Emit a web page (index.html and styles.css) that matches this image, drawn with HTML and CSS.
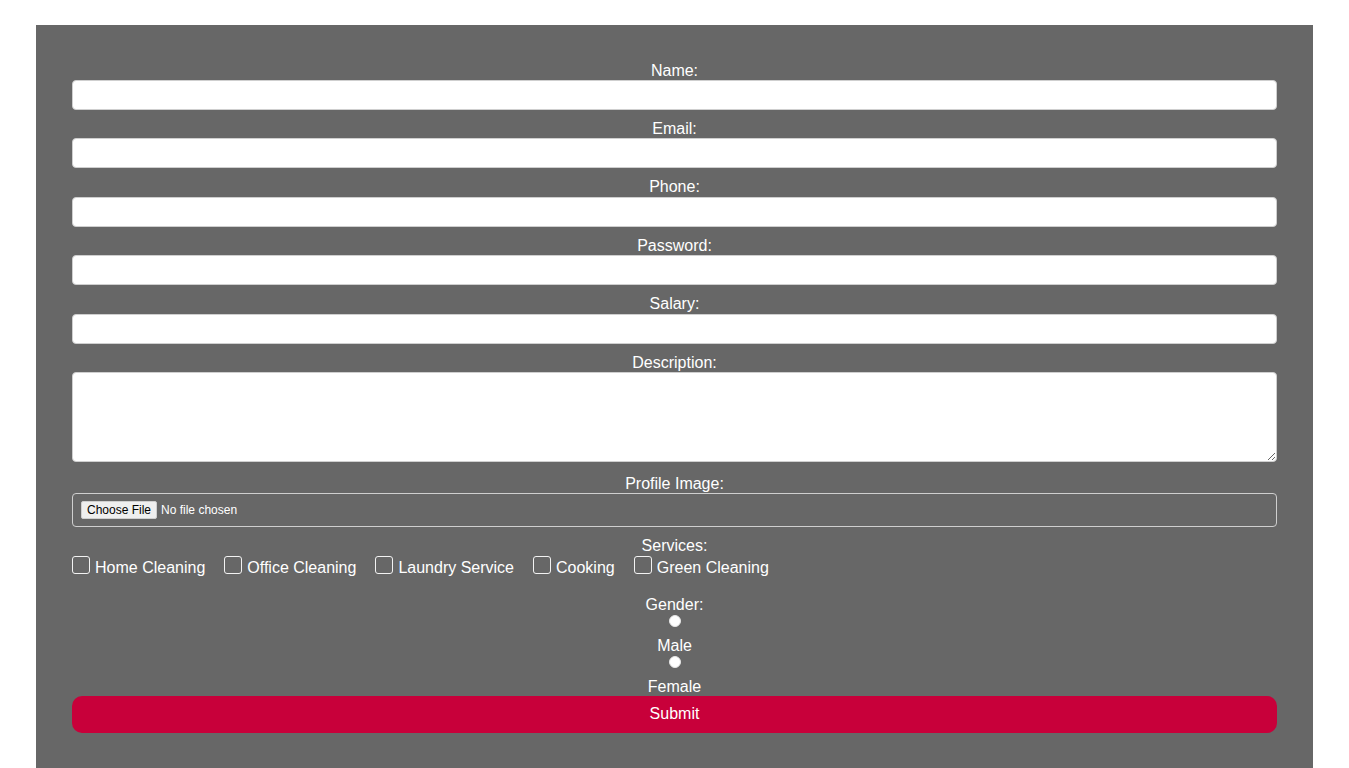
FILE: index.html
```html
<!DOCTYPE html>
<html lang="en">
<head>
<meta charset="utf-8">
<title>Registration</title>
<link rel="stylesheet" href="styles.css">
</head>
<body>
<form class="form">
  <label class="field-label" for="name">Name:</label>
  <input class="text-input" type="text" id="name">
  <label class="field-label" for="email">Email:</label>
  <input class="text-input" type="email" id="email">
  <label class="field-label" for="phone">Phone:</label>
  <input class="text-input" type="tel" id="phone">
  <label class="field-label" for="password">Password:</label>
  <input class="text-input" type="password" id="password">
  <label class="field-label" for="salary">Salary:</label>
  <input class="text-input" type="number" id="salary">
  <label class="field-label" for="desc">Description:</label>
  <textarea class="text-area" id="desc"></textarea>
  <label class="field-label" for="img">Profile Image:</label>
  <input class="file-input" type="file" id="img">
  <label class="field-label services-label">Services:</label>
  <div class="services">
    <label class="service"><input class="check" type="checkbox"><span>Home Cleaning</span></label>
    <label class="service"><input class="check" type="checkbox"><span>Office Cleaning</span></label>
    <label class="service"><input class="check" type="checkbox"><span>Laundry Service</span></label>
    <label class="service"><input class="check" type="checkbox"><span>Cooking</span></label>
    <label class="service"><input class="check" type="checkbox"><span>Green Cleaning</span></label>
  </div>
  <label class="field-label gender-label">Gender:</label>
  <input class="radio" type="radio" name="gender" id="male">
  <label class="radio-label" for="male">Male</label>
  <input class="radio" type="radio" name="gender" id="female">
  <label class="radio-label" for="female">Female</label>
  <button class="submit" type="submit">Submit</button>
</form>
</body>
</html>
```
FILE: styles.css
```css
html, body {
  margin: 0;
  padding: 0;
  background: #ffffff;
}
body {
  font-family: "Liberation Sans", Arial, sans-serif;
  font-size: 16px;
}
.form {
  margin: 25px 36px 0;
  padding: 36.6px 36px 40px;
  background: #676767;
  color: #ffffff;
  display: flex;
  flex-direction: column;
}
.field-label {
  display: block;
  text-align: center;
  line-height: 18.4px;
  height: 18.4px;
}
.text-input {
  box-sizing: border-box;
  width: 100%;
  height: 30px;
  margin: 0 0 10px;
  padding: 4px 8px;
  border: 1px solid #cfcfcf;
  border-radius: 4px;
  background: #ffffff;
  font: inherit;
}
.text-area {
  box-sizing: border-box;
  width: 100%;
  height: 90px;
  margin: 0 0 12.6px;
  padding: 4px 8px;
  border: 1px solid #cfcfcf;
  border-radius: 4px;
  background: #ffffff;
  font: inherit;
}
.file-input {
  box-sizing: border-box;
  width: 100%;
  height: 34px;
  margin: 0 0 9.8px;
  padding: 7px 8px;
  border: 1px solid #cfcfcf;
  border-radius: 4px;
  color: #ffffff;
  font-family: "Liberation Sans", Arial, sans-serif;
  font-size: 12px;
}
.file-input::file-selector-button {
  font-family: "Liberation Sans", Arial, sans-serif;
  font-size: 12px;
  margin-right: 4px;
  padding: 1px 5px;
  background: #efefef;
  color: #000000;
  border: 1px solid #cfcfcf;
  border-radius: 2px;
}
.services {
  display: flex;
  flex-wrap: wrap;
  margin-top: 1px;
  column-gap: 19px;
}
.service {
  display: flex;
  align-items: flex-start;
  gap: 5px;
}
.service span {
  margin-top: 3px;
  line-height: 18.4px;
}
.check {
  appearance: none;
  -webkit-appearance: none;
  box-sizing: border-box;
  width: 18px;
  height: 18px;
  margin: 0;
  border: 1px solid #f2f2f2;
  border-radius: 3px;
  background: transparent;
}
.gender-label {
  margin-top: 18px;
}
.radio {
  appearance: none;
  -webkit-appearance: none;
  align-self: center;
  width: 12px;
  height: 12px;
  margin: 1px 0 10px;
  border-radius: 50%;
  background: #ffffff;
  border: 1px solid #e6e6e6;
  box-sizing: border-box;
}
.radio-label {
  display: block;
  text-align: center;
  line-height: 18.4px;
}
.radio-label + .radio {
  margin-top: 1px;
}
.submit {
  margin-top: -1px;
  height: 37px;
  width: 100%;
  border: none;
  border-radius: 10px;
  background: #c8003a;
  color: #ffffff;
  font-family: "Liberation Sans", Arial, sans-serif;
  font-size: 16px;
}
```
